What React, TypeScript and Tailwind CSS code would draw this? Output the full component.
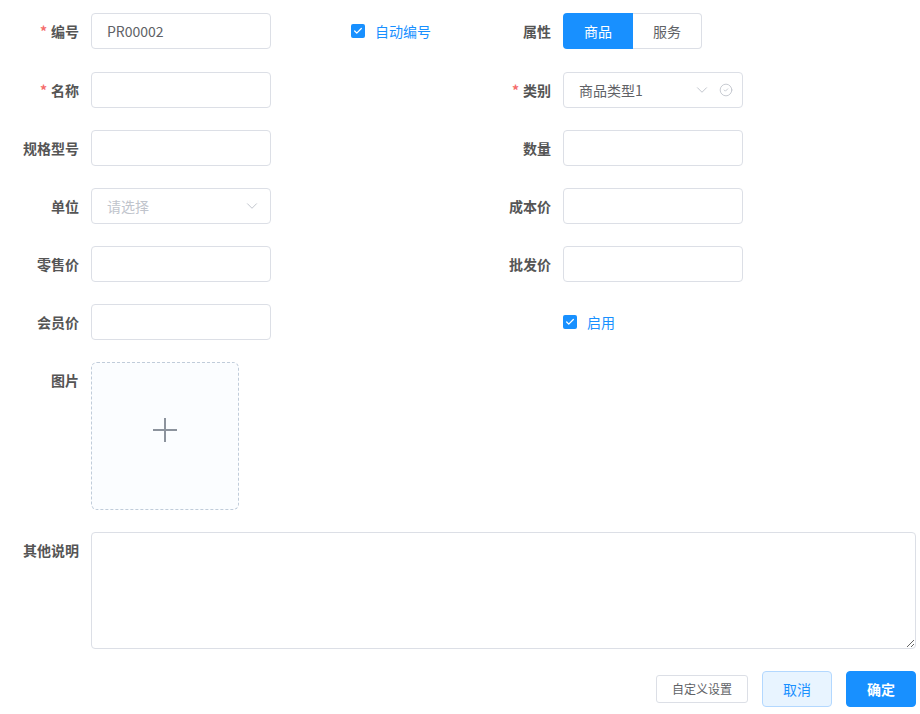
import { ChevronDown, CircleCheck, Check } from "lucide-react";
import type { ReactNode } from "react";

const font = { fontFamily: '"Noto Sans CJK SC", "Noto Sans", sans-serif' };

function Label({ text, required, top }: { text: string; required?: boolean; top?: boolean }) {
  return (
    <div
      className={`flex h-9 w-[91px] shrink-0 items-center justify-end pr-3 text-[14px] font-bold text-[#555] ${
        top ? "self-start" : ""
      }`}
    >
      {required ? <span className="mr-1 text-[#f56c6c]">*</span> : null}
      {text}
    </div>
  );
}

function Input({ value }: { value?: string }) {
  return (
    <div className="flex h-9 w-[180px] items-center rounded border border-[#dcdfe6] bg-white px-[15px] text-[14px] text-[#606266]">
      {value}
    </div>
  );
}

function Select({ value, placeholder, check }: { value?: string; placeholder?: string; check?: boolean }) {
  return (
    <div className="flex h-9 w-[180px] items-center rounded border border-[#dcdfe6] bg-white pl-[15px] pr-[9px] text-[14px]">
      <span className={`flex-1 ${value ? "text-[#606266]" : "text-[#c0c4cc]"}`}>{value ?? placeholder}</span>
      <ChevronDown className="h-[18px] w-[18px] text-[#c0c4cc]" strokeWidth={1.3} />
      {check ? <CircleCheck className="ml-[8px] h-[14px] w-[14px] text-[#c0c4cc]" strokeWidth={1.5} /> : null}
    </div>
  );
}

function CheckBox({ text }: { text: string }) {
  return (
    <div className="flex h-9 items-center gap-[10px] text-[14px] text-[#1890ff]">
      <span className="flex h-[14px] w-[14px] items-center justify-center rounded-[2px] bg-[#1890ff]">
        <Check className="h-[10px] w-[10px] text-white" strokeWidth={3} />
      </span>
      {text}
    </div>
  );
}

function Half({ children }: { children: ReactNode }) {
  return <div className="flex w-[472px] shrink-0 items-center">{children}</div>;
}

export default function App() {
  return (
    <div className="w-[920px] bg-white pt-[13px] pr-1" style={font}>
      <div className="mb-[23px] flex">
        <Half>
          <Label text="编号" required />
          <Input value="PR00002" />
          <div className="ml-20">
            <CheckBox text="自动编号" />
          </div>
        </Half>
        <Half>
          <Label text="属性" />
          <div className="flex h-9 text-[14px]">
            <div className="flex w-[70px] items-center justify-center rounded-l bg-[#1890ff] text-white">商品</div>
            <div className="flex w-[69px] items-center justify-center rounded-r border border-l-0 border-[#dcdfe6] text-[#606266]">
              服务
            </div>
          </div>
        </Half>
      </div>

      <div className="mb-[22px] flex">
        <Half>
          <Label text="名称" required />
          <Input />
        </Half>
        <Half>
          <Label text="类别" required />
          <Select value="商品类型1" check />
        </Half>
      </div>

      <div className="mb-[22px] flex">
        <Half>
          <Label text="规格型号" />
          <Input />
        </Half>
        <Half>
          <Label text="数量" />
          <Input />
        </Half>
      </div>

      <div className="mb-[22px] flex">
        <Half>
          <Label text="单位" />
          <Select placeholder="请选择" />
        </Half>
        <Half>
          <Label text="成本价" />
          <Input />
        </Half>
      </div>

      <div className="mb-[22px] flex">
        <Half>
          <Label text="零售价" />
          <Input />
        </Half>
        <Half>
          <Label text="批发价" />
          <Input />
        </Half>
      </div>

      <div className="mb-[22px] flex">
        <Half>
          <Label text="会员价" />
          <Input />
        </Half>
        <Half>
          <div className="w-[91px]" />
          <CheckBox text="启用" />
        </Half>
      </div>

      <div className="mb-[22px] flex">
        <Label text="图片" top />
        <div className="flex h-[148px] w-[148px] items-center justify-center rounded-md border border-dashed border-[#c0ccda] bg-[#fbfdff]">
          <svg width="26" height="26" viewBox="0 0 26 26" className="mb-3 text-[#8c939d]">
            <path d="M13 1v24M1 13h24" stroke="currentColor" strokeWidth="2" fill="none" />
          </svg>
        </div>
      </div>

      <div className="mb-[22px] flex">
        <Label text="其他说明" top />
        <textarea className="block h-[117px] flex-1 rounded border border-[#dcdfe6] bg-white px-[15px] py-[5px] text-[14px] text-[#606266] outline-none" />
      </div>

      <div className="flex items-center justify-end gap-[14px]">
        <button className="h-7 w-[92px] rounded-[3px] border border-[#dcdfe6] bg-white text-[12px] text-[#606266]">
          自定义设置
        </button>
        <button className="h-9 w-[70px] rounded border border-[#b3d8ff] bg-[#e8f4ff] text-[14px] text-[#1890ff]">
          取消
        </button>
        <button className="h-9 w-[70px] rounded border border-[#1890ff] bg-[#1890ff] text-[14px] font-bold text-white">
          确定
        </button>
      </div>
    </div>
  );
}
